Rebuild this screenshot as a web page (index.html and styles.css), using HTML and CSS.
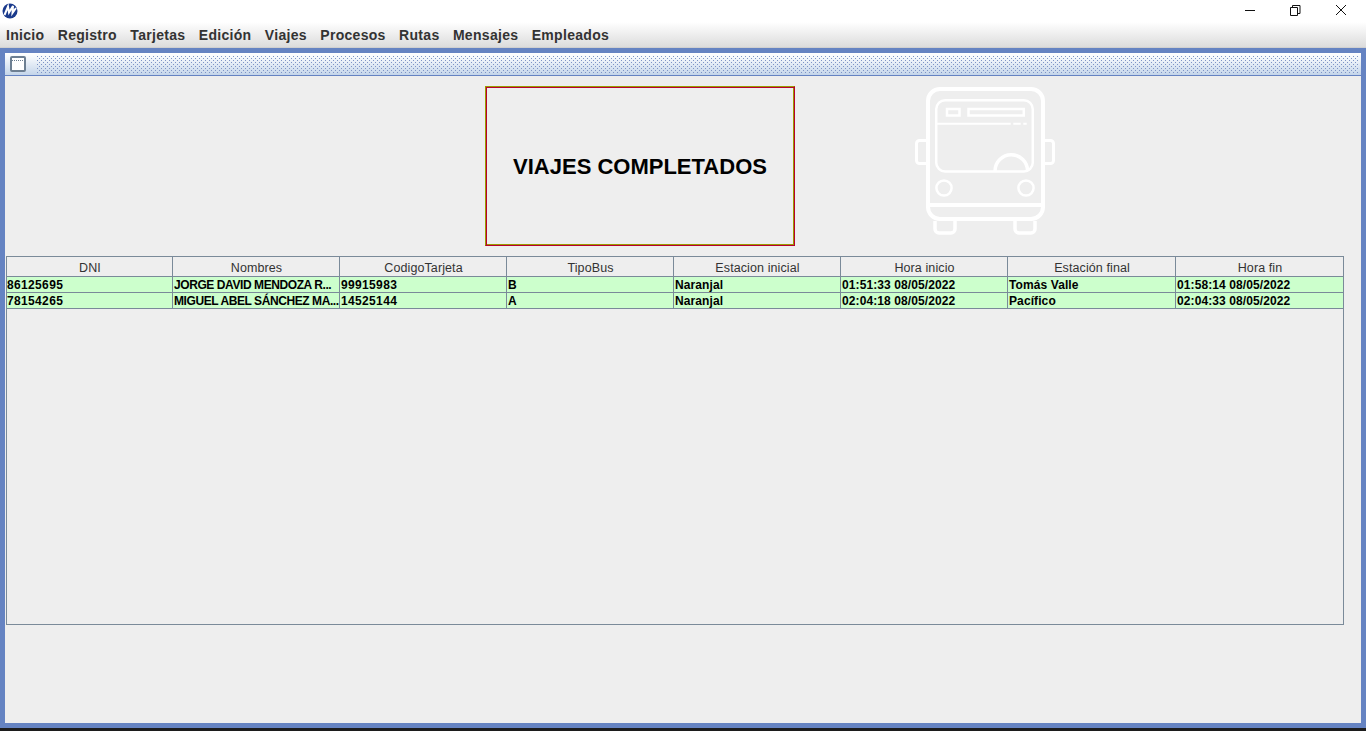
FILE: index.html
```html
<!DOCTYPE html>
<html>
<head>
    <title>Viajes completados</title>
    <link rel="stylesheet" href="styles.css">
</head>
<body>
    <div id="titlebar">
        <svg class="app-logo" width="18" height="18" viewBox="0 0 18 18">
            <circle cx="9" cy="9" r="7.5" fill="#1a3a8c"/>
            <path d="M3.5 13 L7 4.5 L8 10.5 L12 4 L11.5 11 L15 6" fill="none" stroke="#fff" stroke-width="2"/>
        </svg>
        <div class="win-buttons">
            <svg class="win-btn" width="46" height="20" viewBox="0 0 46 20"><path d="M17 10.5h10" stroke="#111" fill="none"/></svg>
            <svg class="win-btn" width="46" height="20" viewBox="0 0 46 20"><path d="M16.500 7.500h7v8h-7zM18.500 7.500v-2h7.500v8h-2.500" stroke="#111" fill="none"/></svg>
            <svg class="win-btn" width="46" height="20" viewBox="0 0 46 20"><path d="M16 5l10 10M26 5l-10 10" stroke="#111" fill="none"/></svg>
        </div>
    </div>
    <div id="menubar">
        <span class="menu-item">Inicio</span>
        <span class="menu-item">Registro</span>
        <span class="menu-item">Tarjetas</span>
        <span class="menu-item">Edición</span>
        <span class="menu-item">Viajes</span>
        <span class="menu-item">Procesos</span>
        <span class="menu-item">Rutas</span>
        <span class="menu-item">Mensajes</span>
        <span class="menu-item">Empleados</span>
    </div>
    <div id="frame">
        <div id="frame-title">
            <svg class="frame-icon" width="16" height="16" viewBox="0 0 16 16">
                <rect x="1" y="1" width="14" height="14" rx="1" fill="#fff" stroke="#6d7f92" stroke-width="2"/>
                <path d="M2 4.500h12" stroke="#6d7f92" stroke-dasharray="1 1" fill="none"/>
            </svg>
            <div class="frame-dots"></div>
        </div>
        <div id="content">
            <div id="top-row">
                <div class="title-box">
                    <h1>VIAJES COMPLETADOS</h1>
                </div>
                <svg class="bus" width="140" height="150" viewBox="0 0 140 150" fill="none" stroke="#fff">
                    <rect x="13" y="2" width="115" height="130" rx="12" stroke-width="4"/>
                    <path d="M11 118h119" stroke-width="4"/>
                    <rect x="21.200" y="13.200" width="96.600" height="71.300" rx="9" stroke-width="2.500"/>
                    <path d="M21 36.700h74.700M98.300 36.700h7.400M108.300 36.700h3.400" stroke-width="2"/>
                    <rect x="32" y="22" width="12.500" height="6.500" stroke-width="2.500"/>
                    <rect x="53.500" y="22" width="55.300" height="6.500" stroke-width="2.500"/>
                    <path d="M80 84a16.300 16.300 0 0 1 32.600 0" stroke-width="3.500"/>
                    <circle cx="29" cy="101" r="7.600" stroke-width="2.500"/>
                    <circle cx="111" cy="101" r="7.600" stroke-width="2.500"/>
                    <path d="M11 53.500H4.500a3 3 0 0 0-3 3v17a3 3 0 0 0 3 3H11" stroke-width="3"/>
                    <path d="M129 53.500h6.500a3 3 0 0 1 3 3v17a3 3 0 0 1-3 3H129" stroke-width="3"/>
                    <path d="M20 134v8a4 4 0 0 0 4 4h12a4 4 0 0 0 4-4v-8" stroke-width="3.500"/>
                    <path d="M100 134v8a4 4 0 0 0 4 4h12a4 4 0 0 0 4-4v-8" stroke-width="3.500"/>
                </svg>
            </div>
            <div id="table-wrap">
                <table>
                    <thead>
                        <tr>
                            <th>DNI</th>
                            <th>Nombres</th>
                            <th>CodigoTarjeta</th>
                            <th>TipoBus</th>
                            <th>Estacion inicial</th>
                            <th>Hora inicio</th>
                            <th>Estación final</th>
                            <th>Hora fin</th>
                        </tr>
                    </thead>
                    <tbody>
                        <tr>
                            <td class="num">86125695</td>
                            <td class="name">JORGE DAVID MENDOZA R...</td>
                            <td class="num">99915983</td>
                            <td>B</td>
                            <td>Naranjal</td>
                            <td>01:51:33 08/05/2022</td>
                            <td>Tomás Valle</td>
                            <td>01:58:14 08/05/2022</td>
                        </tr>
                        <tr>
                            <td class="num">78154265</td>
                            <td class="name">MIGUEL ABEL SÁNCHEZ MA...</td>
                            <td class="num">14525144</td>
                            <td>A</td>
                            <td>Naranjal</td>
                            <td>02:04:18 08/05/2022</td>
                            <td>Pacífico</td>
                            <td>02:04:33 08/05/2022</td>
                        </tr>
                    </tbody>
                </table>
            </div>
        </div>
    </div>
    <div id="taskbar"></div>
</body>
</html>
```

FILE: styles.css
```css
html, body {
    height: 731px;
    overflow: hidden;
}
body {
    font-family: "Liberation Sans", Arial, sans-serif;
    background-color: #fff;
    margin: 0;
    padding: 0;
    display: flex;
    flex-direction: column;
}
#titlebar {
    height: 22px;
    flex: none;
    display: flex;
    justify-content: space-between;
    align-items: flex-start;
    background-color: #fff;
}
.app-logo {
    margin: 2px 0 0 1px;
}
.win-buttons {
    display: flex;
}
.win-btn {
    display: block;
}
#menubar {
    height: 26px;
    flex: none;
    box-sizing: border-box;
    display: flex;
    align-items: center;
    gap: 13.4px;
    padding: 1px 0 0 6px;
    background: linear-gradient(#fff, #dcdcdc);
    border-bottom: 1px solid #d0d0d0;
}
.menu-item {
    font-size: 14px;
    font-weight: bold;
    color: #333;
    letter-spacing: 0.3px;
}
#frame {
    height: 680px;
    flex: none;
    box-sizing: border-box;
    border: 5px solid #6583c2;
    display: flex;
    flex-direction: column;
}
#frame-title {
    height: 23px;
    flex: none;
    box-sizing: border-box;
    display: flex;
    align-items: center;
    padding: 0 3px 0 5px;
    background: linear-gradient(#fff, #f2f6fb 25%, #c4d5ea);
    border-bottom: 1px solid #6583c2;
}
.frame-icon {
    flex: none;
}
.frame-dots {
    flex: 1;
    height: 17px;
    margin-left: 11px;
    background-image: radial-gradient(circle at 0.5px 0.5px, #7d93c6 0.7px, transparent 0.7px), radial-gradient(circle at 0.5px 0.5px, #7d93c6 0.7px, transparent 0.7px);
    background-size: 4px 4px;
    background-position: 0 0, 2px 2px;
}
#content {
    flex: 1;
    background-color: #eee;
    padding-left: 1px;
}
#top-row {
    height: 180px;
    display: flex;
    align-items: flex-start;
    padding-left: 479px;
}
.title-box {
    width: 310px;
    height: 160px;
    flex: none;
    margin-top: 10px;
    box-sizing: border-box;
    padding-top: 1px;
    border: 1px solid;
    border-color: #9a9a00 #b8002e #b8002e #9a9a00;
    box-shadow: inset 1px 1px 0 #b8002e, inset -1px -1px 0 #9a9a00;
    display: flex;
    align-items: center;
    justify-content: center;
}
.title-box h1 {
    margin: 0;
    font-size: 22px;
    color: #000;
}
.bus {
    flex: none;
    margin: 11px 0 0 120px;
}
#table-wrap {
    width: 1338px;
    height: 369px;
    box-sizing: border-box;
    border: 1px solid #7a8a99;
}
table {
    width: 1336px;
    table-layout: fixed;
    border-collapse: separate;
    border-spacing: 0;
    font-size: 12px;
}
th:nth-child(1) { width: 166px; }
th:nth-child(7) { width: 168px; }
th {
    width: 167px;
    height: 20px;
    padding: 2px 0 0 1px;
    box-sizing: border-box;
    font-size: 12.5px;
    font-weight: normal;
    color: #333;
    letter-spacing: 0.1px;
    background-color: #eee;
    border-right: 1px solid #7a8a99;
    border-bottom: 1px solid #7a8a99;
}
td {
    height: 16px;
    padding: 1px 0 0 1px;
    box-sizing: border-box;
    font-weight: bold;
    color: #000;
    letter-spacing: 0.1px;
    background-color: #ccffcc;
    border-right: 1px solid #7a8a99;
    border-bottom: 1px solid #7a8a99;
    white-space: nowrap;
    overflow: hidden;
    line-height: 14px;
}
th:last-child, td:last-child {
    border-right: none;
}
td:first-child {
    padding-left: 0;
}
td.num {
    letter-spacing: 0.35px;
}
td.name {
    letter-spacing: -0.42px;
}
#taskbar {
    height: 3px;
    flex: none;
    background-color: #1c1c1c;
}
```
